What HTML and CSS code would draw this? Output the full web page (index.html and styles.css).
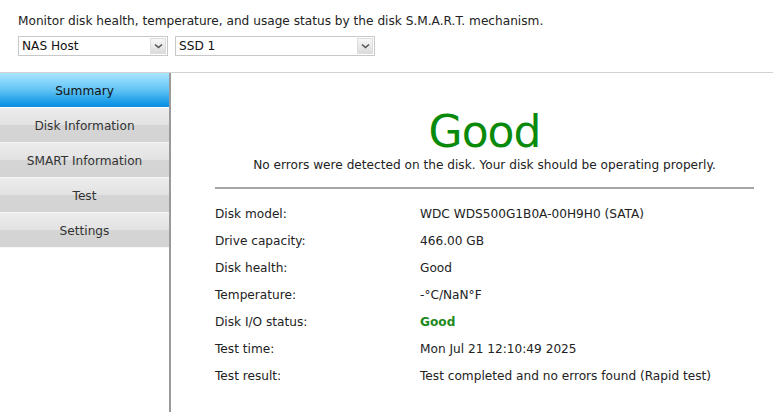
FILE: index.html
```html
<!DOCTYPE html>
<html>
<head>
<meta charset="utf-8">
<link rel="stylesheet" href="styles.css">
</head>
<body>
<div class="top">
  <p class="intro">Monitor disk health, temperature, and usage status by the disk S.M.A.R.T. mechanism.</p>
  <div class="selects">
    <div class="select sel-host"><span class="sel-text">NAS Host</span><span class="sel-btn"><svg width="9" height="6" viewBox="0 0 9 6"><path d="M1 1.5 L4.5 4.5 L8 1.5" fill="none" stroke="#555" stroke-width="1.6"/></svg></span></div>
    <div class="select sel-disk"><span class="sel-text">SSD 1</span><span class="sel-btn"><svg width="9" height="6" viewBox="0 0 9 6"><path d="M1 1.5 L4.5 4.5 L8 1.5" fill="none" stroke="#555" stroke-width="1.6"/></svg></span></div>
  </div>
</div>
<div class="main">
  <nav class="side">
    <div class="tab active">Summary</div>
    <div class="tab">Disk Information</div>
    <div class="tab">SMART Information</div>
    <div class="tab">Test</div>
    <div class="tab">Settings</div>
  </nav>
  <section class="content">
    <div class="status">Good</div>
    <div class="status-msg">No errors were detected on the disk. Your disk should be operating properly.</div>
    <hr class="sep">
    <div class="rows">
      <div class="row"><span class="lbl">Disk model:</span><span class="val">WDC WDS500G1B0A-00H9H0 (SATA)</span></div>
      <div class="row"><span class="lbl">Drive capacity:</span><span class="val">466.00 GB</span></div>
      <div class="row"><span class="lbl">Disk health:</span><span class="val">Good</span></div>
      <div class="row"><span class="lbl">Temperature:</span><span class="val">-°C/NaN°F</span></div>
      <div class="row"><span class="lbl">Disk I/O status:</span><span class="val good">Good</span></div>
      <div class="row"><span class="lbl">Test time:</span><span class="val">Mon Jul 21 12:10:49 2025</span></div>
      <div class="row"><span class="lbl">Test result:</span><span class="val">Test completed and no errors found (Rapid test)</span></div>
    </div>
  </section>
</div>
</body>
</html>
```
FILE: styles.css
```css
html, body {
  margin: 0;
  padding: 0;
  background: #fff;
  overflow: hidden;
}
body {
  font-family: "DejaVu Sans", Verdana, sans-serif;
  font-size: 12.15px;
  color: #222;
  width: 773px;
  height: 412px;
}
.top {
  padding: 13px 0 0 18px;
  height: 59px;
  border-bottom: 1px solid #d2d2d2;
}
.intro {
  margin: 0;
  line-height: 16px;
  color: #222;
}
.selects {
  display: flex;
  gap: 7px;
  margin-top: 7px;
}
.select {
  display: flex;
  height: 18px;
  border: 1px solid #c8c8c8;
  background: #fff;
  box-sizing: content-box;
}
.sel-host { width: 148px; }
.sel-disk { width: 198px; }
.sel-text {
  flex: 1;
  padding-left: 3px;
  line-height: 18px;
  color: #111;
}
.sel-btn {
  width: 16px;
  margin: 1px;
  border: 1px solid #ddd;
  background: linear-gradient(#f7f7f7, #dcdcdc);
  display: flex;
  align-items: center;
  justify-content: center;
  box-sizing: border-box;
}
.main {
  display: flex;
  height: 339px;
}
.side {
  width: 169px;
  border-right: 2px solid #9a9a9a;
  flex: none;
}
.tab {
  height: 33px;
  padding-top: 1px;
  line-height: 34px;
  text-align: center;
  color: #333;
  background: linear-gradient(#ececec, #e2e2e2 50%, #d5d5d5 51%, #d3d3d3);
  border-bottom: 1px solid #f6f6f6;
}
.tab.active {
  background: linear-gradient(#a9e6ff, #62c3f4 50%, #1a9ce8 85%, #0b8ee2);
  color: #111;
  border-bottom: 1px solid #fff;
}
.content {
  flex: 1;
  padding: 0 19px 0 44px;
}
.status {
  text-align: center;
  color: #0a8a0a;
  font-size: 44px;
  line-height: 56px;
  margin-top: 31px;
  letter-spacing: -1px;
}
.status-msg {
  text-align: center;
  line-height: 16px;
  margin-top: -3px;
}
.sep {
  margin: 14px 0 0 0;
  border: 0;
  border-top: 2px solid #a6a6a6;
  height: 0;
}
.rows {
  margin-top: 17px;
}
.row {
  display: flex;
  height: 27px;
  line-height: 16px;
}
.lbl {
  width: 205px;
  flex: none;
}
.val.good {
  color: #1d8a1d;
  font-weight: bold;
}
```
